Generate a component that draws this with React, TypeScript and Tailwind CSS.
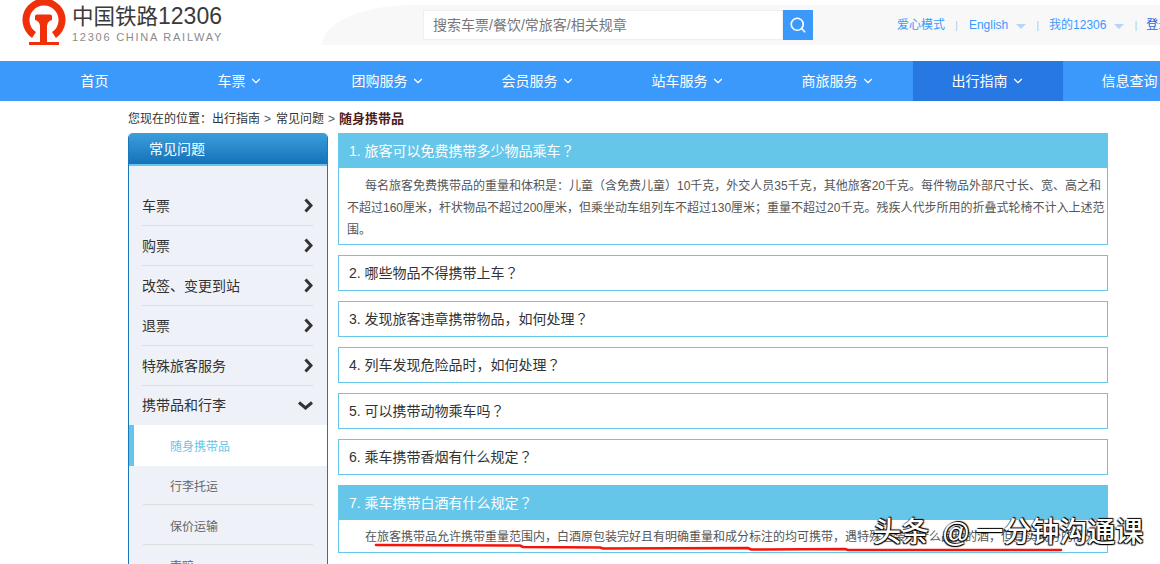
import { ChevronDown, Search } from "lucide-react";

const nav = ["车票", "团购服务", "会员服务", "站车服务", "商旅服务", "出行指南", "信息查询"];
const closed = [
  "2. 哪些物品不得携带上车",
  "3. 发现旅客违章携带物品，如何处理",
  "4. 列车发现危险品时，如何处理",
  "5. 可以携带动物乘车吗",
  "6. 乘车携带香烟有什么规定",
];
const side = ["车票", "购票", "改签、变更到站", "退票", "特殊旅客服务"];

function Q() {
  return <span className="[font-family:'Noto_Sans_CJK_TC',sans-serif]">？</span>;
}
function Tri() {
  return <span className="ml-2 mt-[3px] h-0 w-0 border-x-[5px] border-t-[5px] border-x-transparent border-t-[#b5d6f8]" />;
}
function Sep() {
  return <span className="text-[11px] text-[#a9cdf6]">|</span>;
}
function Logo() {
  return (
    <svg width="44" height="46" viewBox="0 0 44 46" className="ml-[22px] shrink-0">
      <path d="M12 35 A18 18 0 1 1 32 35" fill="none" stroke="#f0300a" strokeWidth="7" />
      <path d="M13 16 Q13 14.5 15 14.5 H28 Q30 14.5 30 16 V20 Q25.5 21 25 26 V42 H37 V45 H7 V42 H18 V26 Q17.5 21 13 20 Z" fill="#f0300a" />
    </svg>
  );
}

export default function App() {
  return (
    <div className="relative h-[564px] w-[1160px] overflow-hidden bg-white text-[#333] [font-family:'Liberation_Sans','Noto_Sans_CJK_SC',sans-serif]">
      {/* top */}
      <div className="flex h-[61px]">
        <div className="flex w-[322px] shrink-0 items-start overflow-hidden">
          <Logo />
          <div className="ml-[6px] flex flex-col">
            <div className="h-[32px] whitespace-nowrap pt-[3px] text-[21.5px] leading-[26px] text-[#3a3a3a]">
              中国铁路<span className="text-[23px]">12306</span>
            </div>
            <div className="whitespace-nowrap text-[11px] leading-[10px] tracking-[1.75px] text-[#8a8a8a]">12306 CHINA RAILWAY</div>
          </div>
        </div>
        <div className="mt-[5px] flex h-[40px] flex-1 items-center whitespace-nowrap rounded-tl-[90px_40px] bg-[#f8f8f8] pl-[101px]">
          <div className="flex h-[30px] w-[360px] items-center border border-[#efefef] bg-white pl-[9px] text-[14px] text-[#777]">搜索车票/餐饮/常旅客/相关规章</div>
          <div className="flex h-[30px] w-[30px] items-center justify-center bg-[#3b99fc]">
            <Search size={18} color="#fff" strokeWidth={2.2} />
          </div>
          <div className="ml-[84px] flex items-center text-[12px] text-[#3b99fc]">
            <span>爱心模式</span>
            <span className="ml-[10px] mr-[11px]"><Sep /></span>
            <span>English</span>
            <Tri />
            <span className="mx-[10px]"><Sep /></span>
            <span>我的12306</span>
            <Tri />
            <span className="ml-[10px] mr-[9px]"><Sep /></span>
            <span className="text-[#1a66e0]">登录</span>
          </div>
        </div>
      </div>

      {/* nav */}
      <div className="flex h-[40px] whitespace-nowrap bg-[#3b99fc] pl-[20px] text-[14px] text-white">
        <div className="flex w-[143px] shrink-0 items-center justify-center pl-[6px]">首页</div>
        {nav.map((n, i) => (
          <div key={n} className={`flex w-[150px] shrink-0 items-center justify-center gap-[3px] ${n === "出行指南" ? "bg-[#2878e4]" : ""} ${i === 0 ? "pl-[4px]" : ""}`}>
            <span>{n}</span>
            <ChevronDown size={14} strokeWidth={2} />
          </div>
        ))}
      </div>

      {/* breadcrumb */}
      <div className="flex h-[32px] items-center whitespace-nowrap pl-[128px] pt-[3px] text-[12px] text-[#333]">
        您现在的位置：出行指南
        <span className="ml-[4px] mr-[5px] text-[#555]">&gt;</span>
        常见问题
        <span className="mx-[4px] text-[#555]">&gt;</span>
        <span className="text-[13px] font-bold text-[#4a2020]">随身携带品</span>
      </div>

      <div className="flex items-start pl-[128px]">
        {/* sidebar */}
        <div className="w-[200px] shrink-0 overflow-hidden rounded-t-[5px] border-x border-[#1a77bb] bg-[#eef1f8]">
          <div className="flex h-[31px] items-center bg-gradient-to-b from-[#3a9fdc] to-[#1472b9] pl-[20px] pt-[1px] text-[14px] text-white">常见问题</div>
          <div className="h-[2px] bg-[#66c6e9]" />
          <div className="pt-[20px]">
            {side.map((s) => (
              <div key={s} className="ml-[13px] mr-[14px] flex h-[40px] items-center justify-between border-b border-[#dddddd] pt-[2px] text-[14px] text-[#333]">
                <span>{s}</span>
                <svg width="9" height="15" viewBox="0 0 9 15" fill="none" className="-mt-[2px]">
                  <path d="M1.5 1.5 L7 7.5 L1.5 13.5" stroke="#333" strokeWidth="3" />
                </svg>
              </div>
            ))}
            <div className="ml-[13px] mr-[14px] flex h-[39px] items-center justify-between text-[14px] text-[#333]">
              <span>携带品和行李</span>
              <svg width="15" height="9" viewBox="0 0 15 9" fill="none">
                <path d="M1 1.5 L7.5 7 L14 1.5" stroke="#333" strokeWidth="3" />
              </svg>
            </div>
            <div className="flex h-[41px] items-center border-l-[5px] border-[#66c6e9] bg-white pl-[36px] pt-[2px] text-[12px] text-[#66c6e9]">随身携带品</div>
            <div className="mx-[14px] flex h-[39px] items-center border-b border-[#dddddd] pl-[27px] pt-[4px] text-[12px] text-[#666]">行李托运</div>
            <div className="mx-[14px] flex h-[40px] items-center border-b border-[#dddddd] pl-[27px] pt-[4px] text-[12px] text-[#666]">保价运输</div>
            <div className="mx-[14px] flex h-[40px] items-center pl-[27px] pt-[4px] text-[12px] text-[#666]">索赔</div>
          </div>
        </div>

        {/* main */}
        <div className="ml-[10px] flex w-[770px] shrink-0 flex-col gap-[10px]">
          <div className="border border-[#66c6e9]">
            <div className="flex h-[34px] items-center bg-[#66c6e9] pl-[10px] text-[14px] text-white">
              <span>1. 旅客可以免费携带多少物品乘车<Q /></span>
            </div>
            <p className="pb-[3px] pl-[8px] pt-[7px] indent-[18px] text-[12px] leading-[22px] text-[#555]">
              每名旅客免费携带品的重量和体积是：儿童（含免费儿童）10千克，外交人员35千克，其他旅客20千克。每件物品外部尺寸长、宽、高之和不超过160厘米，杆状物品不超过200厘米，但乘坐动车组列车不超过130厘米；重量不超过20千克。残疾人代步所用的折叠式轮椅不计入上述范围。
            </p>
          </div>
          {closed.map((c) => (
            <div key={c} className="flex h-[36px] items-center border border-[#66c6e9] pl-[10px] text-[14px] text-[#333]">
              <span>{c}<Q /></span>
            </div>
          ))}
          <div className="border border-[#66c6e9]">
            <div className="flex h-[34px] items-center bg-[#66c6e9] pl-[10px] text-[14px] text-white">
              <span>7. 乘车携带白酒有什么规定<Q /></span>
            </div>
            <p className="h-[32px] overflow-hidden whitespace-nowrap pl-[8px] pt-[1px] indent-[18px] text-[12px] leading-[32px] text-[#555]">
              在旅客携带品允许携带重量范围内，白酒原包装完好且有明确重量和成分标注的均可携带，遇特殊包装的什么品种的酒，但真实成分的除外。
            </p>
          </div>
        </div>
      </div>

      {/* red hand-drawn underline */}
      <svg className="pointer-events-none absolute left-0 top-0" width="1160" height="564" fill="none">
        <path d="M376 545 L520 545.5 L523 547 L600 547.5 L603 548.5 L748 548 L751 549.5 L845 549 L848 550 L1061 550" stroke="#f5140a" strokeWidth="2.6" strokeLinecap="round" />
      </svg>

      {/* watermark */}
      <div className="absolute left-[873px] top-[514px] whitespace-nowrap text-[28px] font-medium leading-[38px] text-white [text-shadow:1px_1px_1px_#000,-1px_1px_1px_#000,1px_-1px_1px_#000]">
        头条 <span className="mx-[5px]">@</span>一分钟沟通课
      </div>
    </div>
  );
}
